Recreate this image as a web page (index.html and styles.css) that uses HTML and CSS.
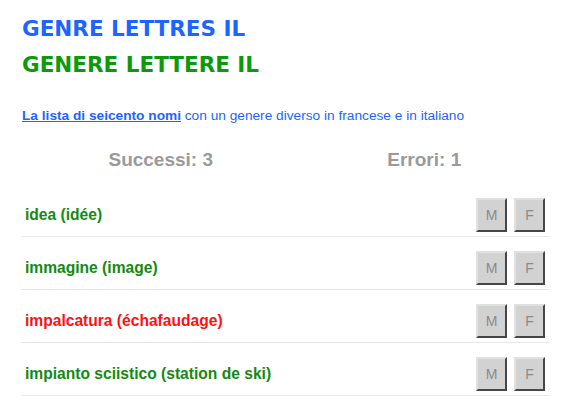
FILE: index.html
```html
<!DOCTYPE html>
<html lang="it">
<head>
<meta charset="utf-8">
<title>Genre lettres IL</title>
<link rel="stylesheet" href="styles.css">
</head>
<body>
<div class="page">
  <h1 class="title title-fr">GENRE LETTRES IL</h1>
  <h1 class="title title-it">GENERE LETTERE IL</h1>
  <p class="desc"><a href="#" class="desc-link">La lista di seicento nomi</a> con un genere diverso in francese e in italiano</p>
  <div class="stats">
    <div class="stat">Successi: 3</div>
    <div class="stat">Errori: 1</div>
  </div>
  <ul class="words">
    <li class="word"><span class="word-text ok">idea (idée)</span><span class="btns"><button class="btn">M</button><button class="btn">F</button></span></li>
    <li class="word"><span class="word-text ok">immagine (image)</span><span class="btns"><button class="btn">M</button><button class="btn">F</button></span></li>
    <li class="word"><span class="word-text err">impalcatura (échafaudage)</span><span class="btns"><button class="btn">M</button><button class="btn">F</button></span></li>
    <li class="word"><span class="word-text ok">impianto sciistico (station de ski)</span><span class="btns"><button class="btn">M</button><button class="btn">F</button></span></li>
  </ul>
</div>
</body>
</html>
```
FILE: styles.css
```css
html, body { margin: 0; padding: 0; background: #fff; }
body { font-family: "Liberation Sans", Arial, sans-serif; }
.page { width: 528px; padding: 11px 0 0 22px; }
.title {
  margin: 0;
  font-family: "DejaVu Sans", "Liberation Sans", sans-serif;
  font-weight: bold;
  font-size: 21.5px;
  line-height: 36px;
}
.title-fr { color: #1a66ff; }
.title-it { color: #0a9a0a; }
.desc { margin: 25px 0 0; font-size: 13.7px; color: #1a66ff; line-height: 16px; }
.desc-link { color: #1a66ff; font-weight: bold; }
.stats { display: flex; width: 527px; margin: 25px 0 0 7px; }
.stat { flex: 1; text-align: center; font-size: 19px; font-weight: bold; color: #9a9a9a; line-height: 22px; }
.words { list-style: none; margin: 13px 0 0 -1px; padding: 0; }
.word {
  display: flex; align-items: center; justify-content: space-between;
  padding: 14px 0 4px 4px; border-bottom: 1px solid #e8e8e8;
}
.word-text { font-size: 15.6px; font-weight: bold; }
.ok { color: #138a13; }
.err { color: #ff1111; }
.btns { display: flex; gap: 7px; margin-right: 5px; }
.btn {
  width: 31px; height: 34px; padding: 0;
  background: #d2d2d2; color: #8a8a8a;
  font-family: "Liberation Sans", Arial, sans-serif; font-size: 14px;
  border: 2px outset #e0e0e0; border-right-color: #9a9a9a; border-bottom-color: #9a9a9a;
}
```
